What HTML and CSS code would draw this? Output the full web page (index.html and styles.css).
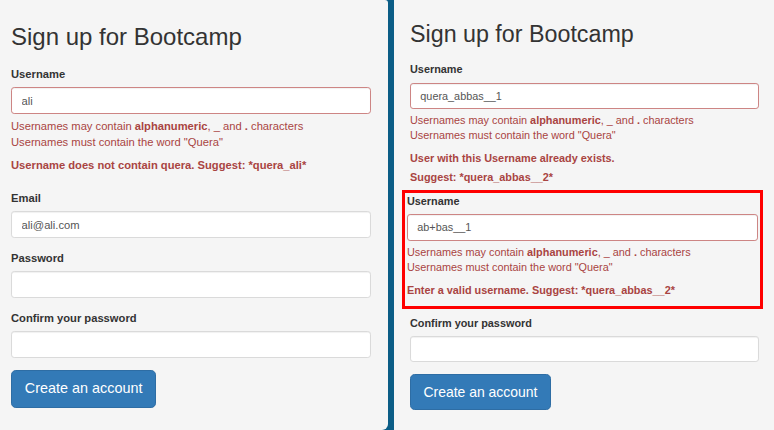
FILE: index.html
```html
<!DOCTYPE html>
<html lang="en">
<head>
<meta charset="utf-8">
<title>Sign up for Bootcamp</title>
<link rel="stylesheet" href="styles.css">
</head>
<body>
<div class="screen">
  <section class="panel panel-left">
    <form class="form">
      <h2 class="title">Sign up for Bootcamp</h2>
      <div class="group has-error group-user">
        <label class="label">Username</label>
        <input class="input" type="text" value="ali">
        <div class="help">Usernames may contain <b>alphanumeric</b>, _ and <b>.</b> characters<br>Usernames must contain the word "Quera"</div>
        <div class="error error-left">Username does not contain quera. Suggest: *quera_ali*</div>
      </div>
      <div class="group">
        <label class="label">Email</label>
        <input class="input" type="text" value="ali@ali.com">
      </div>
      <div class="group">
        <label class="label">Password</label>
        <input class="input" type="password">
      </div>
      <div class="group">
        <label class="label">Confirm your password</label>
        <input class="input" type="password">
      </div>
      <button class="btn" type="button">Create an account</button>
    </form>
  </section>
  <section class="panel panel-right">
    <form class="form">
      <h2 class="title">Sign up for Bootcamp</h2>
      <div class="group has-error group-exists">
        <label class="label">Username</label>
        <input class="input" type="text" value="quera_abbas__1">
        <div class="help">Usernames may contain <b>alphanumeric</b>, _ and <b>.</b> characters<br>Usernames must contain the word "Quera"</div>
        <div class="error">User with this Username already exists.</div>
        <div class="error error-suggest">Suggest: *quera_abbas__2*</div>
      </div>
      <div class="highlight">
        <div class="group has-error group-flush">
          <label class="label">Username</label>
          <input class="input" type="text" value="ab+bas__1">
          <div class="help">Usernames may contain <b>alphanumeric</b>, _ and <b>.</b> characters<br>Usernames must contain the word "Quera"</div>
          <div class="error error-wide">Enter a valid username. Suggest: *quera_abbas__2*</div>
        </div>
      </div>
      <div class="group">
        <label class="label">Confirm your password</label>
        <input class="input" type="password">
      </div>
      <button class="btn" type="button">Create an account</button>
    </form>
  </section>
</div>
</body>
</html>
```
FILE: styles.css
```css
* {
  box-sizing: border-box;
}

html,
body {
  margin: 0;
  height: 100%;
}

body {
  font-family: "Liberation Sans", Arial, sans-serif;
  font-size: 14px;
  line-height: 1.42857;
  color: #333;
  background: #0b5d86;
  overflow: hidden;
}

.screen {
  display: flex;
  gap: 6px;
  height: 430px;
}

.panel {
  background: #f5f5f5;
  height: 430px;
  overflow: hidden;
}

.panel-left {
  width: 388px;
  flex: none;
  padding-left: 11px;
  border-radius: 0 3px 6px 0;
}

.panel-right {
  flex: 1;
  padding-left: 16px;
}

.form {
  width: 450px;
  margin: 0;
}

.panel-left .form {
  zoom: 0.8;
  padding-top: 30.5px;
}

.panel-right .form {
  zoom: 0.776;
  padding-top: 28px;
}

.title {
  font-size: 30px;
  line-height: 33px;
  font-weight: 500;
  margin: 0 0 19.5px;
  color: #333;
}

.label {
  display: block;
  font-weight: bold;
  line-height: 20px;
  margin-bottom: 6px;
}

.input {
  display: block;
  width: 100%;
  height: 34px;
  padding: 6px 12px;
  font-family: inherit;
  font-size: 14px;
  line-height: 20px;
  color: #555;
  background: #fff;
  border: 1px solid #dadada;
  border-radius: 4px;
  box-shadow: inset 0 1px 1px rgba(0, 0, 0, 0.075);
  margin: 0;
}

.has-error .input {
  border-color: #cd8584;
}

.help {
  margin-top: 5px;
  color: #a94442;
}

.error {
  margin-top: 9px;
  color: #a94442;
  font-weight: bold;
}

.error-left {
  margin-top: 8px;
}

.error-suggest {
  margin-top: 5px;
}

.error-wide {
  margin-top: 10px;
}

.group {
  margin-bottom: 15px;
}

.group-user {
  margin-bottom: 22px;
}

.group-exists {
  margin-bottom: 5px;
}

.group-flush {
  margin-bottom: 0;
}

.highlight {
  border: 5px solid #ff0000;
  margin: 0 -4.7px 9px -10.3px;
  padding: 2px 2.5px 9px;
}

.btn {
  display: inline-block;
  padding: 10px 16px;
  font-family: inherit;
  font-size: 18px;
  line-height: 24px;
  color: #fff;
  background: #337ab7;
  border: 1px solid #2e6da4;
  border-radius: 6px;
  cursor: pointer;
}
```
